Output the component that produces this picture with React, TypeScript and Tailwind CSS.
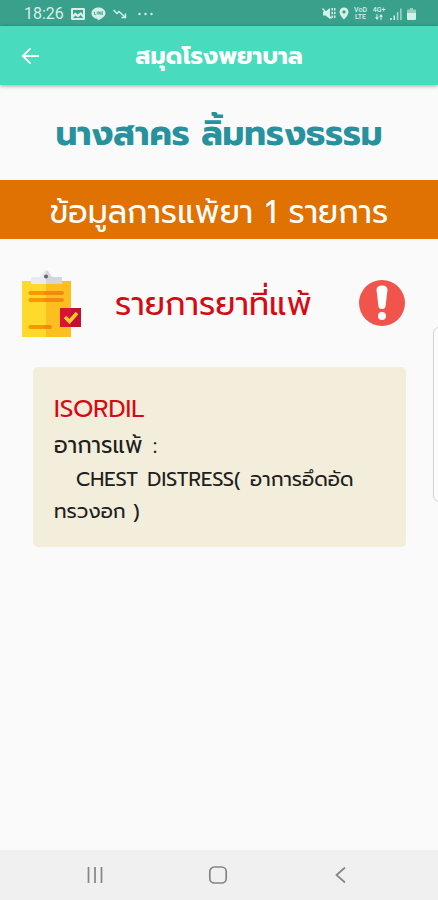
import type { ReactNode } from "react";

const allergies = [
  {
    name: "ISORDIL",
    symptom: ["CHEST DISTRESS( อาการอึดอัด", "ทรวงอก )"],
  },
];

function StatusBar() {
  return (
    <div className="flex h-[26px] items-center justify-between bg-[#39a08c] pt-[1px] pl-6 pr-[22px] text-[#d5f0e9]">
      <div className="flex items-center">
        <span className="w-[47px] font-[Roboto] text-[16px] leading-none">18:26</span>
        <svg className="h-[12px] w-[14px]" viewBox="0 0 14 12">
          <path
            d="M1.200 0h11.600q1.200 0 1.200 1.200v9.600q0 1.200-1.200 1.200H1.200Q0 12 0 10.800V1.200Q0 0 1.200 0zM2 2v4.500l2.500-2 2 2L10 4l2 2.500V2zM2 10h10L9.800 7 7 9.500 4.500 7.500z"
            fill="currentColor"
            fillRule="evenodd"
          />
        </svg>
        <svg className="ml-1.5 h-[14px] w-[15px]" viewBox="0 0 15 14">
          <path d="M7.500.5C3.500.5.5 3 .5 6.200c0 2.900 2.500 5 5.600 5.600.7.2.6.7.5 1.700 2.600-1.100 7.900-3.900 7.900-7.300C14.500 3 11.500.5 7.500.5z" fill="currentColor" />
          <path d="M3.500 4.600v3h1.400M6.300 4.600v3M7.800 7.600v-3l1.500 3v-3M12 4.700h-1.200v2.900H12M10.800 6.100H12" fill="none" stroke="#39a08c" strokeWidth="0.8" />
        </svg>
        <svg className="ml-[7px] h-[10px] w-[14px]" viewBox="0 0 14 10" fill="none" stroke="currentColor" strokeWidth="1.400">
          <path d="M.5 1l3.500 3.500L6 2.500l6 5.500M12.500 4.500v4h-4" />
        </svg>
        <svg className="ml-[11px] h-1 w-[15px]" viewBox="0 0 15 4" fill="currentColor">
          <circle cx="1.500" cy="2" r="1.200" />
          <circle cx="7.500" cy="2" r="1.200" />
          <circle cx="13.500" cy="2" r="1.200" />
        </svg>
      </div>
      <div className="flex items-center">
        <svg className="h-[13px] w-[14px]" viewBox="0 0 14 13" fill="none" stroke="currentColor">
          <path d="M1 4.500h2.500L8 1v11L3.500 8.500H1z" fill="currentColor" stroke="none" />
          <path d="M.5 1.500l9 10" strokeWidth="1.300" />
          <path d="M10.200 1v10.500M12.700 1v10.500" strokeWidth="1.500" strokeDasharray="2.500 1.300" />
        </svg>
        <svg className="ml-[3px] h-[13px] w-[10px]" viewBox="0 0 10 13">
          <path d="M5 .5A4.500 4.500 0 0 0 .5 5c0 3 4.500 7.500 4.500 7.500S9.500 8 9.500 5A4.500 4.500 0 0 0 5 .5zm0 2.700a1.700 1.700 0 1 1 0 3.400 1.700 1.700 0 0 1 0-3.400z" fill="currentColor" />
        </svg>
        <div className="ml-1 flex w-[15px] flex-col items-center font-[Roboto] text-[7px] leading-[7px] font-medium">
          <span>VoD</span>
          <span>LTE</span>
        </div>
        <div className="ml-1 flex w-[14px] flex-col items-center font-[Roboto] text-[7px] leading-[7px] font-medium">
          <span>4G+</span>
          <svg className="h-[6px] w-[8px]" viewBox="0 0 8 6" fill="currentColor">
            <path d="M1.500 0h1v3.200H4L2 6 0 3.200h1.500zM5.500 6h1V2.800H8L6 0 4 2.800h1.500z" />
          </svg>
        </div>
        <svg className="ml-1 h-[12px] w-[12px]" viewBox="0 0 12 12" stroke="currentColor" strokeWidth="1.500">
          <path d="M1 12v-2" />
          <path d="M4.300 12V7.500" />
          <path d="M7.600 12V4" opacity="0.700" />
          <path d="M10.900 12V.5" opacity="0.700" />
        </svg>
        <svg className="ml-[5px] h-[12px] w-[9px]" viewBox="0 0 9 12" fill="currentColor">
          <path d="M3 0h3v1.500h2q1 0 1 1V5H0V2.500q0-1 1-1h2z" opacity="0.600" />
          <path d="M0 5h9v6q0 1-1 1H1q-1 0-1-1z" />
        </svg>
      </div>
    </div>
  );
}

function AppBar({ title }: { title: string }) {
  return (
    <header className="relative z-10 grid h-[59px] grid-cols-[60px_1fr_60px] items-center bg-[#48dbbd] text-white shadow-[0_1px_4px_rgba(0,0,0,0.35)]">
      <svg className="ml-[21px] h-[18px] w-[19px]" viewBox="0 0 19 18" fill="none" stroke="currentColor" strokeWidth="1.900">
        <path d="M18 9H2M9.500 1.300L1.800 9l7.700 7.700" />
      </svg>
      <h1 className="pt-0.5 text-center text-[23.700px] leading-none font-bold whitespace-nowrap">{title}</h1>
    </header>
  );
}

function ClipboardIcon() {
  return (
    <svg className="h-[69px] w-[60px]" viewBox="0 0 60 69">
      <path d="M0 12h24v56H0z" fill="#ffda2d" />
      <path d="M24 12h25v56H24z" fill="#fdbf1f" />
      <path d="M9 15V9q0-1 1-1h7q2 0 3-3 1-3 4-4v14z" fill="#e9eaee" />
      <path d="M24 1q3 1 4 4 1 3 4 3h7q1 0 1 1v6H24z" fill="#d5d6db" />
      <circle cx="24" cy="7.500" r="2" fill="#5e6670" />
      <path d="M8.500 24H24M8.500 31H24M8.500 58H24" stroke="#fb9700" strokeWidth="4" strokeLinecap="round" />
      <path d="M24 24h16M24 31h16M24 58h4" stroke="#f08a10" strokeWidth="4" strokeLinecap="round" />
      <path d="M38 39h11v19H38z" fill="#d91335" />
      <path d="M49 39h10v19H49z" fill="#bf1230" />
      <path d="M43 48l4.500 4.500L55 44" fill="none" stroke="#ffca2b" strokeWidth="3.600" />
    </svg>
  );
}

function AlertIcon() {
  return (
    <svg className="h-[46px] w-[46px]" viewBox="0 0 46 46">
      <circle cx="23" cy="23" r="23" fill="#f0544a" />
      <path d="M17.500 10q0-4.500 5.500-4.500t5.500 4.500l-2 16.500q-.5 2.500-3.500 2.500t-3.500-2.500z" fill="#fff" />
      <circle cx="23" cy="36" r="4" fill="#fff" />
    </svg>
  );
}

function NavButton({ children }: { children: ReactNode }) {
  return (
    <svg className="h-5 w-5" viewBox="0 0 20 20" fill="none" stroke="#858585" strokeWidth="1.700">
      {children}
    </svg>
  );
}

function App() {
  return (
    <div className="relative flex h-[900px] w-[438px] flex-col overflow-hidden bg-[#fafafa] font-[Prompt,Kanit,'Noto_Sans_Thai','Noto_Sans',sans-serif]">
      <StatusBar />
      <AppBar title="สมุดโรงพยาบาล" />
      <main className="flex flex-1 flex-col">
        <h2 className="flex h-[95px] items-center justify-center pt-0.5 text-[34px] font-bold whitespace-nowrap text-[#27929d]">
          นางสาคร ลิ้มทรงธรรม
        </h2>
        <div className="flex h-[59px] items-center justify-center bg-[#e07204] pt-[6px] text-[31.900px] leading-none whitespace-nowrap text-white">
          ข้อมูลการแพ้ยา {allergies.length} รายการ
        </div>
        {/* Section heading */}
        <div className="flex h-[128px] items-center pr-[33px] pl-[22px]">
          <ClipboardIcon />
          <h3 className="ml-[33px] flex-1 pt-1 text-[32px] whitespace-nowrap text-[#d60a12]">รายการยาที่แพ้</h3>
          <AlertIcon />
        </div>
        {allergies.map((item) => (
          <div key={item.name} className="mr-8 ml-[33px] h-[180px] rounded-[5px] bg-[#f3eddb] px-[21px] pt-[24px] text-[#20201c]">
            <p className="text-[24.300px] leading-[36px] text-[#d60a12]">{item.name}</p>
            <p className="text-[22.500px] leading-[36px] whitespace-nowrap [word-spacing:2px]">อาการแพ้ :</p>
            <p className="pl-[22px] text-[20px] leading-[32px] whitespace-nowrap [word-spacing:2px]">{item.symptom[0]}</p>
            <p className="text-[20px] leading-[32px] whitespace-nowrap">{item.symptom[1]}</p>
          </div>
        ))}
      </main>
      {/* Edge panel handle */}
      <div className="absolute top-[327px] -right-2 h-[175px] w-[13px] rounded-md border border-[#d2d2d2] bg-[#fcfcfc]" />
      <nav className="flex h-[50px] items-center justify-between bg-[#f0f0f0] pr-[88px] pl-[85px]">
        <NavButton>
          <path d="M3.500 2v16M10 2v16M16.500 2v16" />
        </NavButton>
        <NavButton>
          <rect x="1.800" y="2" width="16.400" height="16" rx="4.500" />
        </NavButton>
        <NavButton>
          <path d="M15 2.500L6.500 10l8.500 7.500" />
        </NavButton>
      </nav>
    </div>
  );
}

export default App;
